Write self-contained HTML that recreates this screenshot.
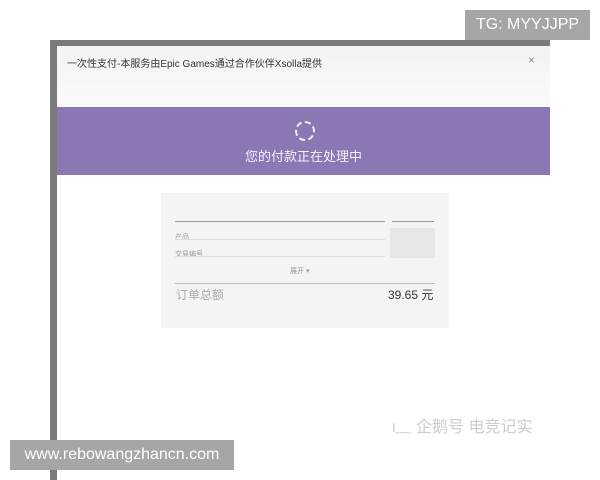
<!DOCTYPE html>
<html><head><meta charset="utf-8"><style>
body{margin:0;width:600px;height:480px;background:#fff;position:relative;overflow:hidden;font-family:"Liberation Sans","Noto Sans CJK SC",sans-serif}
.a{position:absolute}
</style></head><body>
<div class="a" style="left:50px;top:40px;width:500px;height:440px;background:#7a7a7a"></div>
<div class="a" style="left:57px;top:46px;width:493px;height:434px;background:#fff"></div>
<div class="a" style="left:57px;top:46px;width:493px;height:61px;background:linear-gradient(#f3f3f3,#fafafa)"></div>
<div class="a" style="left:67px;top:55px;font-size:10px;color:#333">一次性支付-本服务由Epic Games通过合作伙伴Xsolla提供</div>
<div class="a" style="left:528px;top:53px;font-size:12px;color:#888">×</div>
<div class="a" style="left:57px;top:107px;width:493px;height:68px;background:#8a77b4"></div>
<div class="a" style="left:295px;top:121px;width:16px;height:16px;border:2px dashed #eee;border-radius:50%"></div>
<div class="a" style="left:57px;top:146px;width:493px;text-align:center;font-size:13px;color:#f4f0fa">您的付款正在处理中</div>
<div class="a" style="left:161px;top:193px;width:288px;height:135px;background:#f4f4f4"></div>
<div class="a" style="left:175px;top:221px;width:210px;height:1px;background:#999"></div>
<div class="a" style="left:392px;top:221px;width:42px;height:1px;background:#999"></div>
<div class="a" style="left:390px;top:228px;width:45px;height:30px;background:#e6e6e6"></div>
<div class="a" style="left:175px;top:232px;font-size:7px;color:#999">产品</div>
<div class="a" style="left:175px;top:239px;width:210px;height:1px;background:#ddd"></div>
<div class="a" style="left:175px;top:249px;font-size:7px;color:#999">交易编号</div>
<div class="a" style="left:175px;top:256px;width:210px;height:1px;background:#ddd"></div>
<div class="a" style="left:290px;top:266px;font-size:7px;color:#999">展开 ▾</div>
<div class="a" style="left:175px;top:283px;width:260px;height:1px;background:#bbb"></div>
<div class="a" style="left:176px;top:286px;font-size:12px;color:#aaa">订单总额</div>
<div class="a" style="left:388px;top:286px;font-size:12px;color:#333">39.65 元</div>
<div class="a" style="left:392px;top:413px;font-size:16px;color:#ccc">ι﹏ 企鹅号 电竞记实</div>
<div class="a" style="left:465px;top:10px;width:125px;height:30px;background:#a6a6a6;color:#fff;font-size:16px;line-height:30px;text-align:center">TG: MYYJJPP</div>
<div class="a" style="left:10px;top:440px;width:224px;height:30px;background:#a6a6a6;color:#fff;font-size:16px;line-height:30px;text-align:center">www.rebowangzhancn.com</div>
</body></html>
